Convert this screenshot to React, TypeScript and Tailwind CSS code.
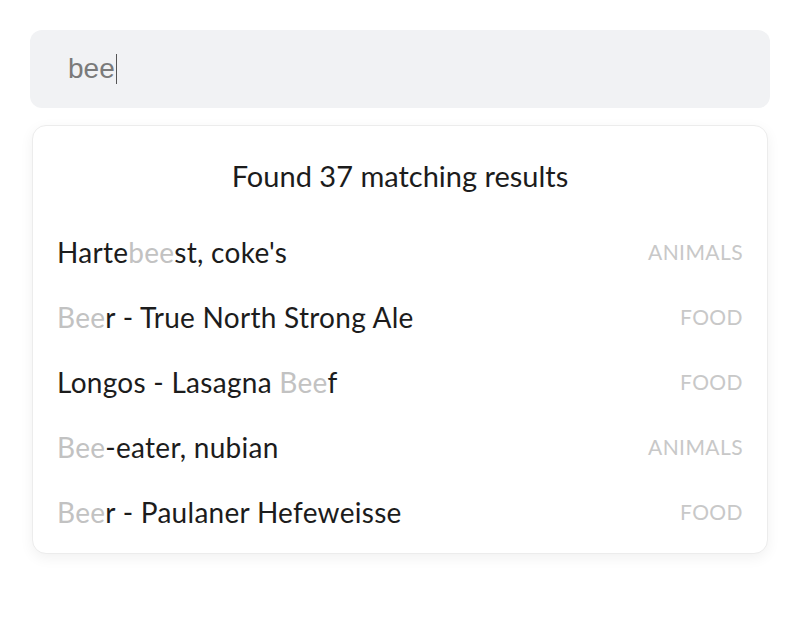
import React from "react";

type Row = { pre: string; hit: string; post: string; cat: string };

const rows: Row[] = [
    { pre: "Harte", hit: "bee", post: "st, coke's", cat: "Animals" },
    { pre: "", hit: "Bee", post: "r - True North Strong Ale", cat: "Food" },
    { pre: "Longos - Lasagna ", hit: "Bee", post: "f", cat: "Food" },
    { pre: "", hit: "Bee", post: "-eater, nubian", cat: "Animals" },
    { pre: "", hit: "Bee", post: "r - Paulaner Hefeweisse", cat: "Food" },
];

const App = () => {
    return (
        <div className="min-h-[640px] bg-white px-[30px] pt-[30px]">
            <div className="h-[78px] rounded-xl bg-[#f1f2f4] px-[38px] flex items-center">
                <span className="font-['Liberation_Sans',Arial,sans-serif] text-[28px] text-[#7a7a7a] leading-none">
                    bee
                </span>
                <span className="w-px h-[30px] bg-[#555] ml-px" />
            </div>

            <div className="mx-[2px] mt-[17px] rounded-[14px] border border-[#ececec] bg-white shadow-[0_4px_14px_rgba(0,0,0,0.06)] px-[24px] pt-[30px] pb-[9px] font-['Lato','Noto_Sans',sans-serif] text-[#1c1c1c]">
                <div className="text-center text-[29px] leading-[40px] mb-[23px]">
                    Found 37 matching results
                </div>
                <ul>
                    {rows.map((r, i) => (
                        <li key={i} className="h-[65px] flex items-center justify-between">
                            <span className="text-[28px] tracking-[0.01em]">
                                {r.pre}
                                <span className="text-[#c2c2c2]">{r.hit}</span>
                                {r.post}
                            </span>
                            <span className="uppercase text-[21px] text-[#c8c8c8] tracking-[0.02em]">
                                {r.cat}
                            </span>
                        </li>
                    ))}
                </ul>
            </div>
        </div>
    );
};

export default App;
